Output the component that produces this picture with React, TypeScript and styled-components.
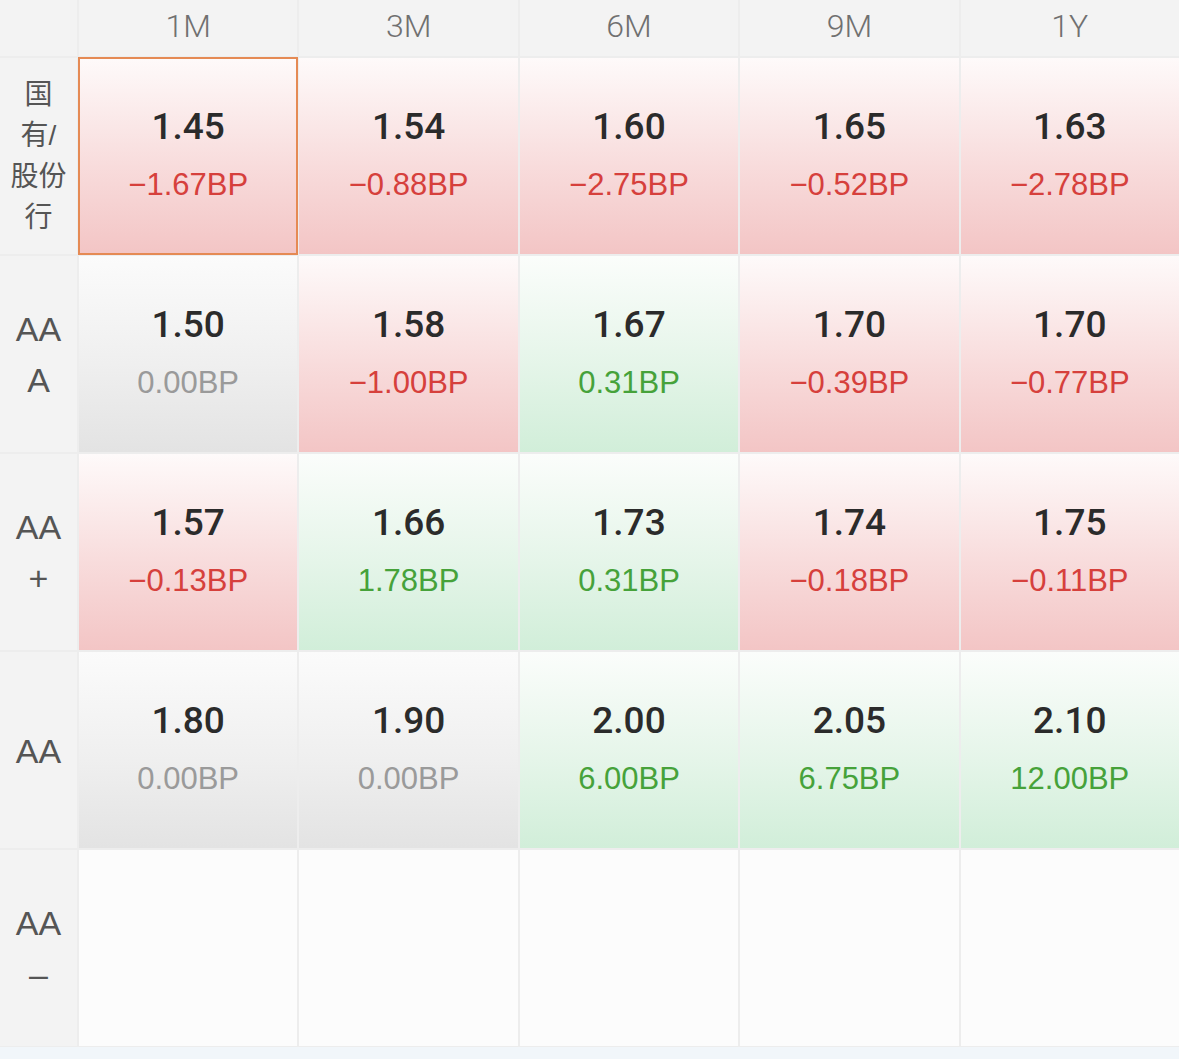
import React from "react";
import styled, { createGlobalStyle, css } from "styled-components";

const Global = createGlobalStyle`
  html, body { margin: 0; padding: 0; background: #f1f6fa; }
  body { font-family: "Liberation Sans", Arial, "Noto Sans CJK SC", sans-serif; }
`;

type Tone = "red" | "green" | "gray" | "empty";

const Page = styled.div`
  width: 1179px;
  height: 1059px;
  background: #f1f6fa;
  overflow: hidden;
`;

const Grid = styled.div`
  display: grid;
  grid-template-columns: 77px repeat(5, 1fr);
  grid-template-rows: 56px repeat(5, 196px);
  gap: 2px;
  background: #ededed;
  padding-bottom: 1px;
`;

const Corner = styled.div`
  background: #f3f3f3;
`;

const HeadCell = styled.div`
  background: #f3f3f3;
  display: flex;
  align-items: center;
  justify-content: center;
  font-family: Roboto, "Liberation Sans", sans-serif;
  font-weight: 300;
  font-size: 32px;
  color: #707070;
  padding-bottom: 4px;
`;

const Label = styled.div<{ $cjk?: boolean }>`
  background: #f3f3f3;
  display: flex;
  flex-direction: column;
  align-items: center;
  justify-content: center;
  color: #555;
  font-size: ${(p) => (p.$cjk ? 28 : 34)}px;
  line-height: ${(p) => (p.$cjk ? 41 : 51)}px;
  font-family: "Liberation Sans", "Noto Sans CJK SC", sans-serif;
  padding-top: ${(p) => (p.$cjk ? 0 : 2)}px;
`;

const tones: Record<Tone, ReturnType<typeof css>> = {
  red: css`background: linear-gradient(180deg, #fefafa 0%, #f8dcdc 55%, #f3c5c5 100%);`,
  green: css`background: linear-gradient(180deg, #fbfdfb 0%, #e5f5e9 55%, #d1eed9 100%);`,
  gray: css`background: linear-gradient(180deg, #fbfbfb 0%, #efefef 55%, #e3e3e3 100%);`,
  empty: css`background: #fcfcfc;`,
};

const Cell = styled.div<{ $tone: Tone; $active?: boolean }>`
  ${(p) => tones[p.$tone]}
  display: flex;
  flex-direction: column;
  align-items: center;
  justify-content: center;
  gap: 14px;
  box-sizing: border-box;
  ${(p) =>
    p.$active &&
    css`
      outline: 2px solid #e58a54;
      outline-offset: -1px;
    `}
`;

const Value = styled.div`
  font-family: Roboto, "Liberation Sans", sans-serif;
  font-size: 37px;
  font-weight: 500;
  color: #2b2b2b;
  line-height: 44px;
`;

const Change = styled.div<{ $c: "red" | "green" | "gray" }>`
  font-family: "Liberation Sans", Arial, sans-serif;
  font-size: 31px;
  font-weight: 400;
  line-height: 44px;
  color: ${(p) => (p.$c === "red" ? "#d6403c" : p.$c === "green" ? "#46a23a" : "#9a9a9a")};
`;

type Item = { v: string; d: string; t: Tone };

const heads = ["1M", "3M", "6M", "9M", "1Y"];

const rows: { label: string[]; cjk?: boolean; items: Item[] }[] = [
  {
    label: ["国", "有/", "股份", "行"],
    cjk: true,
    items: [
      { v: "1.45", d: "−1.67BP", t: "red" },
      { v: "1.54", d: "−0.88BP", t: "red" },
      { v: "1.60", d: "−2.75BP", t: "red" },
      { v: "1.65", d: "−0.52BP", t: "red" },
      { v: "1.63", d: "−2.78BP", t: "red" },
    ],
  },
  {
    label: ["AA", "A"],
    items: [
      { v: "1.50", d: "0.00BP", t: "gray" },
      { v: "1.58", d: "−1.00BP", t: "red" },
      { v: "1.67", d: "0.31BP", t: "green" },
      { v: "1.70", d: "−0.39BP", t: "red" },
      { v: "1.70", d: "−0.77BP", t: "red" },
    ],
  },
  {
    label: ["AA", "+"],
    items: [
      { v: "1.57", d: "−0.13BP", t: "red" },
      { v: "1.66", d: "1.78BP", t: "green" },
      { v: "1.73", d: "0.31BP", t: "green" },
      { v: "1.74", d: "−0.18BP", t: "red" },
      { v: "1.75", d: "−0.11BP", t: "red" },
    ],
  },
  {
    label: ["AA"],
    items: [
      { v: "1.80", d: "0.00BP", t: "gray" },
      { v: "1.90", d: "0.00BP", t: "gray" },
      { v: "2.00", d: "6.00BP", t: "green" },
      { v: "2.05", d: "6.75BP", t: "green" },
      { v: "2.10", d: "12.00BP", t: "green" },
    ],
  },
  {
    label: ["AA", "–"],
    items: [],
  },
];

export default function App() {
  return (
    <Page>
      <Global />
      <Grid>
        <Corner />
        {heads.map((h) => (
          <HeadCell key={h}>{h}</HeadCell>
        ))}
        {rows.map((r, ri) => (
          <React.Fragment key={ri}>
            <Label $cjk={r.cjk}>
              {r.label.map((l, i) => (
                <span key={i}>{l}</span>
              ))}
            </Label>
            {r.items.length
              ? r.items.map((it, ci) => (
                  <Cell key={ci} $tone={it.t} $active={ri === 0 && ci === 0}>
                    <Value>{it.v}</Value>
                    <Change $c={it.t === "red" ? "red" : it.t === "green" ? "green" : "gray"}>{it.d}</Change>
                  </Cell>
                ))
              : heads.map((h) => <Cell key={h} $tone="empty" />)}
          </React.Fragment>
        ))}
      </Grid>
    </Page>
  );
}
